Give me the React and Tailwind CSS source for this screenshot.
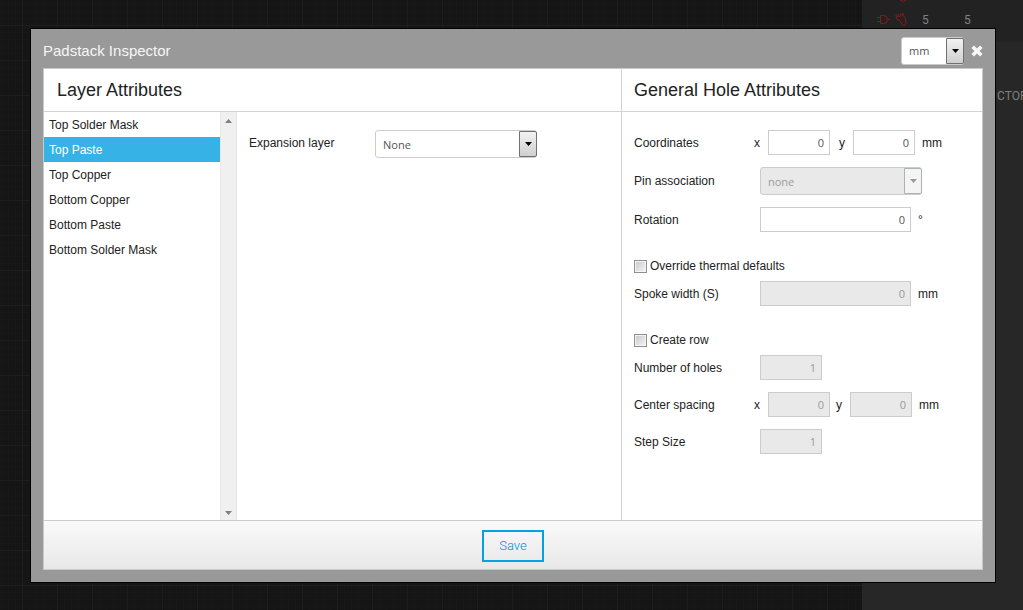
import { useState } from 'react';

const layers = [
  'Top Solder Mask',
  'Top Paste',
  'Top Copper',
  'Bottom Copper',
  'Bottom Paste',
  'Bottom Solder Mask',
];

function Select({ className = '', disabled, options, ...props }) {
  return (
    <div className={`relative h-7 ${className}`}>
      <select
        disabled={disabled}
        className={`w-full h-full appearance-none rounded-[3px] border border-[#ccc] pl-[7px] pr-5 pt-0.5 font-['Open_Sans',sans-serif] text-[11px] ${
          disabled ? 'bg-[#e9e9e9] text-[#999] opacity-100' : 'bg-white text-[#555]'
        }`}
        {...props}
      >
        {options.map((option) => (
          <option key={option}>{option}</option>
        ))}
      </select>
      <span
        className={`pointer-events-none absolute inset-y-0 right-0 my-px flex w-[18px] items-center justify-center rounded-r-[2px] border ${
          disabled
            ? 'border-[#adb2b5] bg-[#f4f4f4] text-[#999]'
            : 'border-[#707070] bg-linear-to-b from-[#f2f2f2] to-[#cfcfcf] text-black'
        }`}
      >
        <svg width="7" height="4" viewBox="0 0 7 4" fill="currentColor">
          <path d="M0 0h7L3.5 4z" />
        </svg>
      </span>
    </div>
  );
}

function NumberBox({ className = 'w-[62px]', ...props }) {
  return (
    <input
      type="text"
      className={`h-[25px] border border-[#ccc] bg-white pr-[5px] text-right font-['Open_Sans',sans-serif] text-[11px] text-[#555] disabled:bg-[#e9e9e9] disabled:text-[#999] ${className}`}
      {...props}
    />
  );
}

function Row({ className = 'mt-3', children }) {
  return <div className={`flex items-center leading-[14px] ${className}`}>{children}</div>;
}

function Check({ id, label }) {
  return (
    <div className="mt-[26px] flex h-4 items-center gap-[3px]">
      <input
        id={id}
        type="checkbox"
        className="size-[13px] appearance-none border border-[#8e8f8f] bg-linear-to-br from-[#c4c8cc] to-[#f6f6f6] shadow-[inset_0_0_0_1px_#f4f4f4] checked:from-[#36b2e6]"
      />
      <label htmlFor={id}>{label}</label>
    </div>
  );
}

function Backdrop() {
  return (
    <div className="absolute inset-0 flex overflow-hidden">
      <div className="flex-1 bg-[#151515]">
        <svg width="100%" height="100%">
          <defs>
            <pattern id="minor" x="1" y="4" width="7" height="7" patternUnits="userSpaceOnUse">
              <path d="M0 .5H7M.5 0V7" stroke="#171717" />
            </pattern>
            <pattern id="major" x="22" y="25" width="35" height="35" patternUnits="userSpaceOnUse">
              <path d="M0 .5H35M.5 0V35" stroke="#1d1d1d" />
            </pattern>
          </defs>
          <rect width="100%" height="100%" fill="url(#minor)" />
          <rect width="100%" height="100%" fill="url(#major)" />
        </svg>
      </div>
      <aside className="w-[161px] bg-[#272727] font-[Roboto,sans-serif] text-xs text-[#808080]">
        <div className="flex h-[42px] items-start bg-[#222] pl-3.5">
          <svg width="34" height="30" viewBox="0 0 34 30" fill="none" stroke="#86191c">
            <path d="M4.500 15.500h3q4 0 4 4t-4 4h-3zM1 17.500h3.500M1 21.500h3.500M11.500 19.500h2.500" />
            <path d="M20 17l7-1.500q2 1 2.500 3.500l.5 4q0 2.500-2.500 2.500-2-.5-2.500-3-.5-2-2.500-2.500-2.500-.5-2.500-3z" />
            <path d="M19.500 15.500h1.500M21.800 14.700h1.500M24 14.200h1.500M26.200 14h2" strokeWidth="1.400" />
            <path d="M24 0l3 1.500 3-1.500" />
          </svg>
          <span className="mt-3 ml-3 w-[42px]">5</span>
          <span className="mt-3">5</span>
        </div>
        <div className="overflow-hidden pt-[46px] pl-[135px] whitespace-nowrap">CTOR</div>
      </aside>
    </div>
  );
}

export default function App() {
  const [layer, setLayer] = useState('Top Paste');

  return (
    <div className="relative min-h-screen font-['Liberation_Sans',Arial,sans-serif] text-xs text-[#222]">
      <Backdrop />

      <div className="relative flex min-h-screen pt-7 pr-[27px] pb-[27px] pl-[30px]">
        <section
          role="dialog"
          aria-labelledby="dialog-title"
          className="flex flex-1 flex-col border border-black bg-[#999] px-3 pb-3"
        >
          <header className="flex h-[39px] items-center">
            <h1 id="dialog-title" className="flex-1 pt-1 text-[15px] text-[#f6f6f6]">Padstack Inspector</h1>
            <Select className="mt-1 w-[63px]" aria-label="Units" options={['mm', 'mil', 'in']} />
            <button aria-label="Close" className="mt-1 ml-[7px] w-3">
              <svg width="12" height="12" viewBox="0 0 12 12" stroke="#f8f8f8" strokeWidth="3.6">
                <path d="M1.700 1.700l8.600 8.600M10.300 1.700l-8.600 8.600" />
              </svg>
            </button>
          </header>

          <div className="flex flex-1 flex-col border border-[#c5cacd] bg-white">
            <div className="flex flex-1">
              <div className="flex flex-1 flex-col">
                <h2 className="h-[43px] border-b border-[#d3d3d3] pl-[13px] text-lg leading-[42px]">
                  Layer Attributes
                </h2>
                <div className="flex flex-1">
                  <ul className="w-44">
                    {layers.map((name) => (
                      <li key={name}>
                        <button
                          onClick={() => setLayer(name)}
                          className={`block h-[25px] w-full pl-[5px] text-left ${
                            name === layer ? 'bg-[#36b2e6] text-white' : ''
                          }`}
                        >
                          {name}
                        </button>
                      </li>
                    ))}
                  </ul>
                  {/* scroll track */}
                  <div className="flex w-[17px] flex-col items-center justify-between border-x border-[#e6e6e6] bg-[#f0f0f0] pt-[7px] pb-[5px] text-[#808080]">
                    <svg width="7" height="4" viewBox="0 0 7 4" fill="currentColor">
                      <path d="M0 4h7L3.5 0z" />
                    </svg>
                    <svg width="7" height="4" viewBox="0 0 7 4" fill="currentColor">
                      <path d="M0 0h7L3.5 4z" />
                    </svg>
                  </div>
                  <div className="flex flex-1 items-start pt-[18px] pl-3">
                    <label htmlFor="expansion" className="w-[126px] leading-[26px]">Expansion layer</label>
                    <Select id="expansion" className="w-[162px]" options={['None', 'Top', 'Bottom']} />
                  </div>
                </div>
              </div>

              <div className="flex w-[361px] flex-col border-l border-[#d3d3d3]">
                <h2 className="h-[43px] border-b border-[#d3d3d3] pl-3 text-lg leading-[42px]">
                  General Hole Attributes
                </h2>
                <form className="pt-[18px] pl-3">
                  <Row className="">
                    <span className="w-[120px]">Coordinates</span>
                    <label htmlFor="coord-x" className="w-3.5">x</label>
                    <NumberBox id="coord-x" defaultValue="0" />
                    <label htmlFor="coord-y" className="ml-[9px] w-3.5">y</label>
                    <NumberBox id="coord-y" defaultValue="0" />
                    <span className="ml-[7px]">mm</span>
                  </Row>
                  <Row>
                    <label htmlFor="pin" className="w-[126px]">Pin association</label>
                    <Select id="pin" className="w-[162px]" disabled options={['none']} />
                  </Row>
                  <Row>
                    <label htmlFor="rotation" className="w-[126px]">Rotation</label>
                    <NumberBox id="rotation" className="w-[151px]" defaultValue="0" />
                    <span className="ml-[7px]">°</span>
                  </Row>

                  <Check id="thermal" label="Override thermal defaults" />
                  <Row className="mt-[7px]">
                    <label htmlFor="spoke" className="w-[126px]">Spoke width (S)</label>
                    <NumberBox id="spoke" className="w-[151px]" defaultValue="0" disabled />
                    <span className="ml-[7px]">mm</span>
                  </Row>

                  <Check id="row" label="Create row" />
                  <Row className="mt-[7px]">
                    <label htmlFor="holes" className="w-[126px]">Number of holes</label>
                    <NumberBox id="holes" defaultValue="1" disabled />
                  </Row>
                  <Row>
                    <span className="w-[120px]">Center spacing</span>
                    <label htmlFor="spacing-x" className="w-3.5">x</label>
                    <NumberBox id="spacing-x" defaultValue="0" disabled />
                    <label htmlFor="spacing-y" className="ml-1.5 w-3.5">y</label>
                    <NumberBox id="spacing-y" defaultValue="0" disabled />
                    <span className="ml-[7px]">mm</span>
                  </Row>
                  <Row>
                    <label htmlFor="step" className="w-[126px]">Step Size</label>
                    <NumberBox id="step" defaultValue="1" disabled />
                  </Row>
                </form>
              </div>
            </div>

            <footer className="flex h-[49px] items-start justify-center border-t border-[#ccc] bg-linear-to-b from-[#fafafa] to-[#e8e8e8] pt-[9px]">
              <button className="h-8 w-[62px] border-2 border-[#00a3e0] font-[Roboto,sans-serif] text-[13px] font-light text-[#0093d0]">
                Save
              </button>
            </footer>
          </div>
        </section>
      </div>
    </div>
  );
}
